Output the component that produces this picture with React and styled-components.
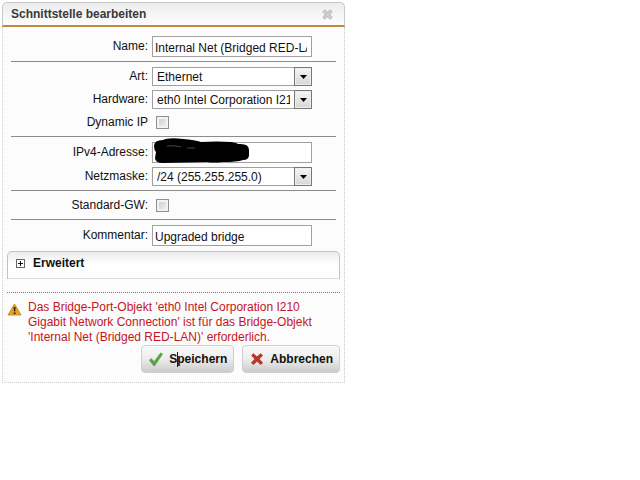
import React, { useState } from "react";
import styled, { createGlobalStyle } from "styled-components";

const GlobalStyle = createGlobalStyle`
	* {
		box-sizing: border-box;
	}

	body {
		margin: 0;
		background-color: #ffffff;
		color: #111111;
		font-family: "Liberation Sans", Arial, sans-serif;
		font-size: 12px;
		line-height: 15px;
	}

	input, select, button {
		font: inherit;
		color: inherit;
		margin: 0;
	}
`;

const Page = styled.main`
	padding: 2px;
`;

const Panel = styled.section`
	max-width: 343px;
`;

const Header = styled.header`
	display: flex;
	align-items: center;
	justify-content: space-between;
	height: 25px;
	padding: 0 10px 0 8px;
	border: 1px solid #c8c8c8;
	border-bottom: 2px solid #c08a42;
	border-radius: 5px 5px 0 0;
	background: linear-gradient(#ececec, #fdfdfd);
`;

const Title = styled.h1`
	margin: 0;
	font-size: 12px;
	font-weight: 700;
	color: #3a3a3a;
`;

const CloseButton = styled.button`
	display: flex;
	padding: 0;
	border: 0;
	background: none;
	cursor: pointer;
`;

const Body = styled.form`
	padding: 4px 4px 9px;
	border: 1px dotted #cccccc;
	border-top: 0;
	background-color: #fcfcfc;
`;

const Group = styled.div`
	display: flex;
	flex-direction: column;
	gap: 4px;
	margin: 0 4px;
	padding: 5px 0 4px;

	& + & {
		border-top: 1px solid #8c8c8c;
	}
`;

const Row = styled.div`
	display: grid;
	grid-template-columns: 137px minmax(0, 160px);
	column-gap: 4px;
	align-items: center;
	min-height: 19px;
`;

const Label = styled.label`
	text-align: right;
	white-space: nowrap;
`;

const Control = styled.div`
	position: relative;
	display: flex;
`;

const Input = styled.input`
	width: 100%;
	height: 21px;
	padding: 2px 4px 0 2px;
	border: 1px solid #a0a0a0;
	border-radius: 0;
	background-color: #ffffff;
	outline: none;
`;

const Select = styled.select`
	appearance: none;
	width: 100%;
	height: 19px;
	padding: 1px 21px 0 4px;
	border: 1px solid #a0a0a0;
	border-radius: 0;
	background-color: #ffffff;
	outline: none;
	text-overflow: clip;
`;

const Arrow = styled.span`
	position: absolute;
	top: 0;
	right: 0;
	display: flex;
	align-items: center;
	justify-content: center;
	width: 18px;
	height: 19px;
	border: 1px solid #777777;
	background: linear-gradient(#f6f6f6, #d6d6d6);
	box-shadow: inset 0 0 0 1px #eeeeee;
	pointer-events: none;
`;

const Checkbox = styled.input`
	appearance: none;
	width: 13px;
	height: 13px;
	margin-left: 4px;
	border: 1px solid #8e8f8f;
	background: linear-gradient(135deg, #c6cacd, #f4f4f4);
	box-shadow: inset 0 0 0 2px #f2f2f2;

	&:checked {
		background: #555555;
	}
`;

const Scribble = styled.svg`
	position: absolute;
	left: 1px;
	top: -4px;
`;

const Advanced = styled.button`
	display: flex;
	align-items: center;
	gap: 8px;
	width: 100%;
	height: 28px;
	margin-top: 1px;
	padding: 0 8px 4px;
	border: 1px solid #c2c2c2;
	border-bottom: 1px dotted #cccccc;
	border-radius: 5px 5px 0 0;
	background: linear-gradient(#ececec, #ffffff 50%);
	font-weight: 700;
	cursor: pointer;
`;

const Message = styled.div`
	display: flex;
	gap: 6px;
	margin-top: 13px;
	padding-top: 7px;
	border-top: 1px dotted #777777;
	color: #c4161c;

	svg {
		flex: none;
		margin-top: 3px;
	}
`;

const Text = styled.p`
	max-width: 300px;
	margin: 0;
`;

const Actions = styled.div`
	display: flex;
	justify-content: flex-end;
	gap: 8px;
`;

const Button = styled.button`
	display: flex;
	align-items: center;
	gap: 5px;
	height: 28px;
	padding: 0 6px;
	border: 1px solid #cfcfcf;
	border-radius: 4px;
	background: linear-gradient(#fafafa, #ececec 50%, #cccccc);
	font-weight: 700;
	cursor: pointer;
`;

const Caption = styled.span`
	position: relative;
`;

const Caret = styled.span`
	position: absolute;
	left: 8px;
	top: 0;
	width: 1px;
	height: 15px;
	background-color: #0a1a30;
`;

const CloseIcon = () => (
	<svg width='13' height='13' viewBox='0 0 13 13' aria-hidden='true'>
		<path
			d='M2.5 2.5L10.5 10.5M10.5 2.5L2.5 10.5'
			stroke='#b9b9b9'
			strokeWidth='3.6'
		/>
		<path
			d='M2.5 2.5L10.5 10.5M10.5 2.5L2.5 10.5'
			stroke='#d2d2d2'
			strokeWidth='1.6'
		/>
	</svg>
);

const WarningIcon = () => (
	<svg width='15' height='13' viewBox='0 0 15 13' aria-hidden='true'>
		<path
			d='M7.5 1L14 12H1Z'
			fill='#e0a52c'
			stroke='#c98f2c'
			strokeLinejoin='round'
		/>
		<path d='M6.5 4H8.7L8.2 8.6H7Z' fill='#3b2a10' />
		<rect x='6.7' y='9.4' width='1.8' height='1.7' fill='#3b2a10' />
	</svg>
);

const CheckIcon = () => (
	<svg width='16' height='16' viewBox='0 0 16 16' aria-hidden='true'>
		<path
			d='M1 9.2L3.4 7.2L6.1 10.3L12.6 1.6L15 3L6.8 15H5.6Z'
			fill='#58a447'
		/>
	</svg>
);

const CancelIcon = () => (
	<svg width='16' height='16' viewBox='0 0 16 16' aria-hidden='true'>
		<path
			d='M2.2 4.5L4.5 2.3L8 5.6L11.6 2.3L14 4.4L10.5 8L14 11.7L11.7 14L8 10.6L4.4 14L2 11.7L5.5 8Z'
			fill='#b8352b'
		/>
	</svg>
);

const PlusIcon = () => (
	<svg width='9' height='9' viewBox='0 0 9 9' aria-hidden='true'>
		<rect x='0.5' y='0.5' width='8' height='8' fill='#fff' stroke='#666' />
		<path d='M2 4.5H7M4.5 2V7' stroke='#111' />
	</svg>
);

const SelectField = ({ id, label, options }) => (
	<Row>
		<Label htmlFor={id}>{label}</Label>
		<Control>
			<Select id={id}>
				{options.map((option) => (
					<option key={option}>{option}</option>
				))}
			</Select>
			<Arrow>
				<svg width='7' height='4' viewBox='0 0 7 4' aria-hidden='true'>
					<path d='M0 0H7L3.5 4Z' fill='#000' />
				</svg>
			</Arrow>
		</Control>
	</Row>
);

const App = () => {
	const [formData, setFormData] = useState({
		name: "Internal Net (Bridged RED-LAN)",
		address: "",
		comment: "Upgraded bridge",
	});
	const { name, address, comment } = formData;

	const handleChange = (e) => {
		setFormData({ ...formData, [e.target.name]: e.target.value });
	};

	const handleSubmit = (e) => {
		e.preventDefault();
	};

	return (
		<Page>
			<GlobalStyle />
			<Panel>
				<Header>
					<Title>Schnittstelle bearbeiten</Title>
					<CloseButton type='button' aria-label='Schließen'>
						<CloseIcon />
					</CloseButton>
				</Header>
				<Body onSubmit={handleSubmit}>
					<Group>
						<Row>
							<Label htmlFor='name'>Name:</Label>
							<Input
								id='name'
								name='name'
								type='text'
								value={name}
								onChange={handleChange}
							/>
						</Row>
					</Group>
					<Group>
						<SelectField id='type' label='Art:' options={["Ethernet"]} />
						<SelectField
							id='hardware'
							label='Hardware:'
							options={["eth0 Intel Corporation I210"]}
						/>
						<Row>
							<Label htmlFor='dynamic'>Dynamic IP</Label>
							<Checkbox id='dynamic' type='checkbox' />
						</Row>
					</Group>
					<Group>
						<Row>
							<Label htmlFor='address'>IPv4-Adresse:</Label>
							<Control>
								<Input
									id='address'
									name='address'
									type='text'
									value={address}
									onChange={handleChange}
								/>
								<Scribble width='97' height='26' viewBox='0 0 97 26'>
									<path d='M1 8Q1 2 10 2Q16 -1 30 1Q42 2 48 4Q64 3 78 4Q84 5 85 6Q96 5 96 12V17Q96 22 90 22Q84 24 70 24Q60 25 54 24L10 25Q2 25 2 20L3 14Q1 12 1 8Z' />
									<path
										d='M14 8Q22 7 28 9M34 10H42'
										fill='none'
										stroke='#777'
										strokeWidth='0.6'
									/>
								</Scribble>
							</Control>
						</Row>
						<SelectField
							id='netmask'
							label='Netzmaske:'
							options={["/24 (255.255.255.0)"]}
						/>
					</Group>
					<Group>
						<Row>
							<Label htmlFor='gateway'>Standard-GW:</Label>
							<Checkbox id='gateway' type='checkbox' />
						</Row>
					</Group>
					<Group>
						<Row>
							<Label htmlFor='comment'>Kommentar:</Label>
							<Input
								id='comment'
								name='comment'
								type='text'
								value={comment}
								onChange={handleChange}
							/>
						</Row>
					</Group>
					<Advanced type='button'>
						<PlusIcon />
						Erweitert
					</Advanced>
					<Message role='alert'>
						<WarningIcon />
						<Text>
							Das Bridge-Port-Objekt 'eth0 Intel Corporation I210 Gigabit
							Network Connection' ist für das Bridge-Objekt 'Internal Net
							(Bridged RED-LAN)' erforderlich.
						</Text>
					</Message>
					<Actions>
						<Button type='submit'>
							<CheckIcon />
							<Caption>
								Speichern
								<Caret />
							</Caption>
						</Button>
						<Button type='button'>
							<CancelIcon />
							Abbrechen
						</Button>
					</Actions>
				</Body>
			</Panel>
		</Page>
	);
};

export default App;
